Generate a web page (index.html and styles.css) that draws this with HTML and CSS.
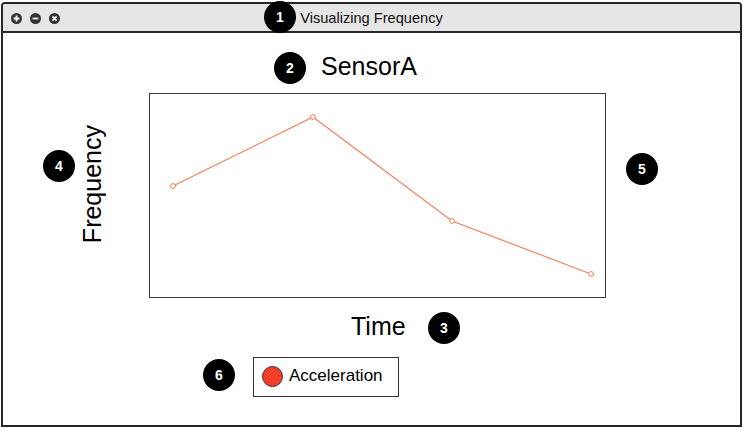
FILE: index.html
```html
<!DOCTYPE html>
<html>
<head>
<meta charset="utf-8">
<link rel="stylesheet" href="styles.css">
</head>
<body>
<div class="window">
  <div class="titlebar">
    <div class="controls">
      <svg class="ctl" viewBox="0 0 11 11"><circle cx="5.5" cy="5.5" r="5.5" fill="#333"/><path d="M5.5 2.6v5.8M2.6 5.5h5.8" stroke="#fff" stroke-width="1.8"/></svg>
      <svg class="ctl" viewBox="0 0 11 11"><circle cx="5.5" cy="5.5" r="5.5" fill="#333"/><path d="M2.6 5.5h5.8" stroke="#fff" stroke-width="1.8"/></svg>
      <svg class="ctl" viewBox="0 0 11 11"><circle cx="5.5" cy="5.5" r="5.5" fill="#333"/><path d="M3.4 3.4l4.2 4.2M7.6 3.4l-4.2 4.2" stroke="#fff" stroke-width="1.6"/></svg>
    </div>
    <div class="title">Visualizing Frequency</div>
    <div></div>
  </div>
  <div class="content">
    <div class="heading">SensorA</div>
    <div class="plot-row">
      <div class="ylabel">Frequency</div>
      <div class="chart">
        <svg width="455" height="203" viewBox="0 0 455 203">
          <polyline points="23,92 163,23 302,127 441,180" fill="none" stroke="#f27f5b" stroke-width="1.1"/>
          <g fill="#fff" stroke="#f27f5b" stroke-width="1">
            <circle cx="23" cy="92" r="2.4"/>
            <circle cx="163" cy="23" r="2.4"/>
            <circle cx="302" cy="127" r="2.4"/>
            <circle cx="441" cy="180" r="2.4"/>
          </g>
        </svg>
      </div>
    </div>
    <div class="xlabel">Time</div>
    <div class="legend">
      <span class="swatch"></span>
      <span class="legend-text">Acceleration</span>
    </div>
  </div>
  <span class="badge b1">1</span>
  <span class="badge b2">2</span>
  <span class="badge b3">3</span>
  <span class="badge b4">4</span>
  <span class="badge b5">5</span>
  <span class="badge b6">6</span>
</div>
</body>
</html>
```
FILE: styles.css
```css
* { box-sizing: border-box; }
html, body { margin: 0; padding: 0; background: #fff; }
body { font-family: "Liberation Sans", Arial, sans-serif; color: #000; }

.window {
  position: relative;
  margin: 2px 0 0 1px;
  width: 741px;
  height: 425px;
  border: 2px solid #262626;
  border-radius: 4px 4px 0 0;
  display: flex;
  flex-direction: column;
  background: #fff;
}

.titlebar {
  height: 29px;
  flex: none;
  background: #e6e6e6;
  border-bottom: 2px solid #262626;
  border-radius: 2px 2px 0 0;
  display: grid;
  grid-template-columns: 1fr auto 1fr;
  align-items: center;
}
.controls { display: flex; gap: 8px; padding-left: 8px; padding-top: 1px; align-items: center; }
.ctl { width: 11px; height: 11px; display: block; }
.title { font-size: 14.6px; color: #111; line-height: 18px; padding-top: 1px; }

.content {
  flex: 1;
  display: flex;
  flex-direction: column;
  padding-top: 18px;
}
.heading {
  margin-left: 318px;
  font-size: 25px;
  line-height: 30px;
  height: 30px;
}
.plot-row {
  display: flex;
  margin-top: 12px;
}
.ylabel {
  margin-left: 74px;
  margin-top: 32px;
  width: 30px;
  font-size: 25px;
  line-height: 30px;
  writing-mode: vertical-rl;
  transform: rotate(180deg);
  align-self: flex-start;
}
.chart {
  margin-left: 42px;
  width: 457px;
  height: 205px;
  border: 1px solid #3a3a3a;
}
.chart svg { display: block; }
.xlabel {
  margin-left: 348px;
  margin-top: 13px;
  font-size: 25px;
  line-height: 30px;
}
.legend {
  margin-left: 250px;
  margin-top: 16px;
  width: 146px;
  height: 40px;
  border: 1px solid #333;
  display: flex;
  align-items: center;
  padding-left: 8px;
  padding-bottom: 2px;
  gap: 6px;
}
.swatch {
  width: 21px;
  height: 21px;
  border-radius: 50%;
  background: #f23d27;
  border: 1px solid #333;
}
.legend-text { font-size: 17px; line-height: 20px; }

.badge {
  position: absolute;
  width: 32px;
  height: 32px;
  margin: -16px 0 0 -16px;
  border-radius: 50%;
  background: #000;
  color: #fff;
  font-weight: bold;
  font-size: 14px;
  display: flex;
  align-items: center;
  justify-content: center;
}
.b1 { left: 277px; top: 13px; }
.b2 { left: 287px; top: 64px; }
.b3 { left: 441px; top: 324px; }
.b4 { left: 56px; top: 162px; }
.b5 { left: 639px; top: 165px; }
.b6 { left: 216px; top: 371px; }
```
